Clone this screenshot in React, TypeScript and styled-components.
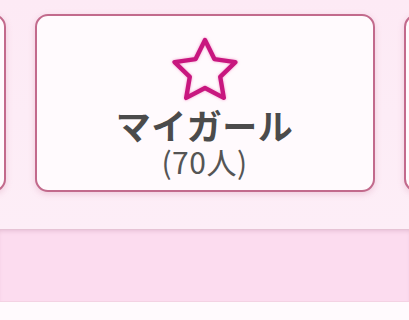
import React from 'react';
import styled, { createGlobalStyle } from 'styled-components';

const GlobalStyle = createGlobalStyle`
  html, body {
    margin: 0;
    padding: 0;
    background: #fffafd;
    font-family: "Noto Sans CJK JP", "Noto Sans", sans-serif;
  }
`;

const Page = styled.div`
  width: 409px;
  height: 320px;
  overflow: hidden;
  display: flex;
  flex-direction: column;
  background: #fffafd;
`;

const CardStrip = styled.div`
  height: 229px;
  flex-shrink: 0;
  box-sizing: border-box;
  padding-top: 14px;
  display: flex;
  justify-content: center;
  align-items: flex-start;
  gap: 29px;
  overflow: hidden;
  background: linear-gradient(180deg, #fdeaf5 0%, #fdeef7 100%);
`;

const Card = styled.div`
  flex-shrink: 0;
  width: 340px;
  height: 178px;
  box-sizing: border-box;
  border: 2px solid #c26a8c;
  border-radius: 13px;
  background: #fffafd;
  box-shadow: 0 2px 6px rgba(200, 110, 150, 0.28);
  display: flex;
  flex-direction: column;
  align-items: center;
  padding-top: 21px;
`;

const StarIcon = styled.svg`
  display: block;
  width: 70px;
  height: 66px;
  filter: drop-shadow(0 0 1.5px rgba(235, 90, 170, 0.55));
`;

const Title = styled.div`
  margin-top: 4px;
  font-size: 35px;
  font-weight: 700;
  line-height: 36px;
  color: #4b4b4b;
  letter-spacing: 0.5px;
`;

const Count = styled.div`
  margin-top: 2px;
  font-size: 30px;
  font-weight: 400;
  line-height: 32px;
  color: #555555;
  letter-spacing: 0.5px;
`;

const Band = styled.div`
  height: 71px;
  flex-shrink: 0;
  background: #fcdcef;
  border-top: 1px solid #e6c3d5;
  box-shadow: inset 0 3px 4px -2px rgba(190, 130, 160, 0.35);
  border-bottom: 1px solid #f4d2e3;
`;

const Bottom = styled.div`
  flex: 1;
  background: #fffafd;
`;

const starPoints =
  '35,3 44.4,22.06 65.43,25.11 50.22,39.94 53.81,60.89 35,51 16.19,60.89 19.78,39.94 4.57,25.11 25.6,22.06';

function Star() {
  return (
    <StarIcon viewBox="0 0 70 66" aria-hidden>
      <polygon
        points={starPoints}
        fill="none"
        stroke="#c8177f"
        strokeWidth={4.4}
        strokeLinejoin="round"
      />
    </StarIcon>
  );
}

export default function App() {
  return (
    <Page>
      <GlobalStyle />
      <CardStrip>
        <Card />
        <Card>
          <Star />
          <Title>マイガール</Title>
          <Count>(70人)</Count>
        </Card>
        <Card />
      </CardStrip>
      <Band />
      <Bottom />
    </Page>
  );
}
